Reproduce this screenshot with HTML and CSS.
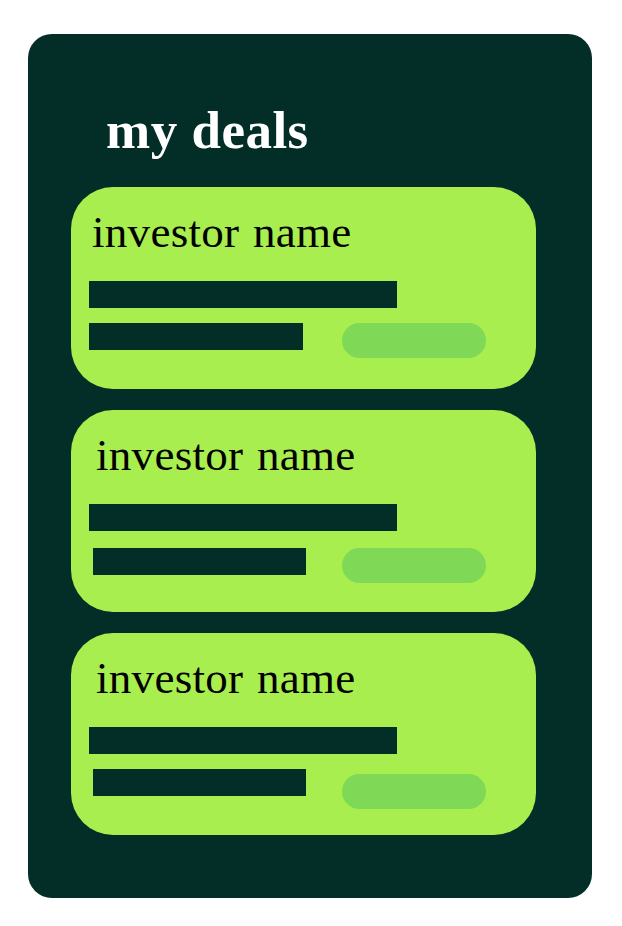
FILE: index.html
```html
<!DOCTYPE html>
<html lang="en">
<head>
<meta charset="utf-8">
<title>my deals</title>
<link rel="stylesheet" href="styles.css">
</head>
<body>
<main class="panel">
  <h1 class="panel-title">my deals</h1>
  <div class="deal-list">
    <section class="deal deal--first">
      <h2 class="deal-name">investor name</h2>
      <div class="bar bar--long"></div>
      <div class="deal-row">
        <div class="bar bar--short"></div>
        <div class="pill"></div>
      </div>
    </section>
    <section class="deal deal--second">
      <h2 class="deal-name">investor name</h2>
      <div class="bar bar--long"></div>
      <div class="deal-row">
        <div class="bar bar--short"></div>
        <div class="pill"></div>
      </div>
    </section>
    <section class="deal deal--third">
      <h2 class="deal-name">investor name</h2>
      <div class="bar bar--long"></div>
      <div class="deal-row">
        <div class="bar bar--short"></div>
        <div class="pill"></div>
      </div>
    </section>
  </div>
</main>
</body>
</html>
```
FILE: styles.css
```css
html, body {
  margin: 0;
  padding: 0;
  background: #ffffff;
}

body {
  font-family: "Liberation Serif", "Times New Roman", serif;
}

.panel {
  box-sizing: border-box;
  width: 564px;
  height: 864px;
  margin: 34px 0 0 28px;
  padding: 70px 0 0 43px;
  background: #022e27;
  border-radius: 24px;
}

.panel-title {
  margin: 0 0 0 35px;
  font-size: 53px;
  line-height: 53px;
  letter-spacing: 0.5px;
  font-weight: 700;
  color: #ffffff;
}

.deal-list {
  display: flex;
  flex-direction: column;
  gap: 21px;
  margin-top: 30px;
}

.deal {
  box-sizing: border-box;
  width: 465px;
  height: 202px;
  padding: 22px 0 0 18px;
  background: #a8ee4e;
  border-radius: 42px;
  display: flex;
  flex-direction: column;
  align-items: flex-start;
}

.deal-name {
  margin: 0 0 0 7px;
  font-size: 45px;
  line-height: 46px;
  letter-spacing: 0.3px;
  word-spacing: 2px;
  font-weight: 400;
  color: #000000;
}

.deal--first .deal-name {
  margin-left: 3px;
}

.bar {
  background: #022e27;
  height: 27px;
}

.bar--long {
  width: 308px;
  margin-top: 26px;
}

.deal-row {
  display: flex;
  align-items: flex-start;
  margin-top: 15px;
}

.bar--short {
  width: 213px;
  margin-left: 4px;
  margin-right: 36px;
}

.deal--first .bar--short {
  width: 214px;
  margin-left: 0;
  margin-right: 39px;
}

.deal--second .deal-row {
  margin-top: 17px;
}

.pill {
  width: 144px;
  height: 35px;
  border-radius: 18px;
  background: #7fd957;
}

.deal--third .pill {
  margin-top: 5px;
}
```
